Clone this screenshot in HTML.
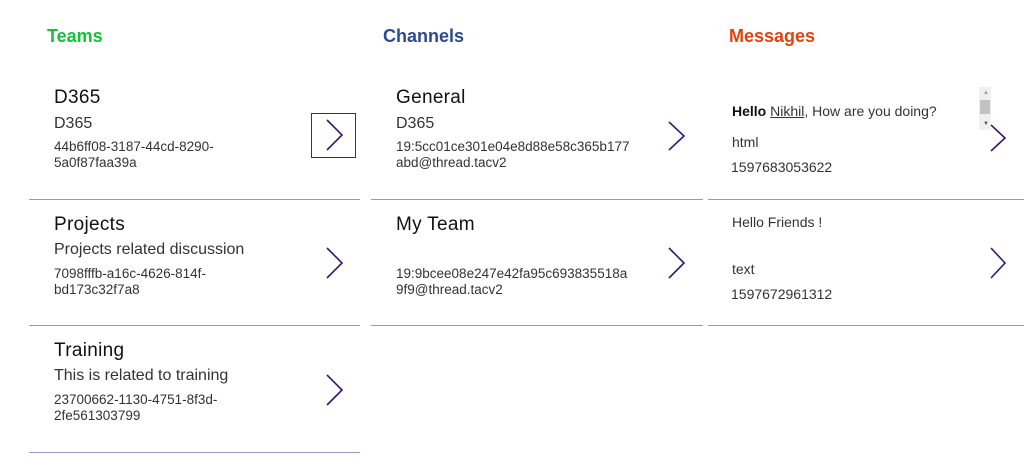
<!DOCTYPE html>
<html><head><meta charset="utf-8">
<style>
html,body{margin:0;padding:0;background:#fff;width:1024px;height:474px;overflow:hidden;position:relative;font-family:"Liberation Sans",sans-serif;}
div,svg{position:absolute;}
.h{font-weight:bold;font-size:18px;line-height:24px;}
.t{font-size:19px;color:#111;line-height:24px;letter-spacing:0.3px}
.s{font-size:16px;color:#333;line-height:20px;}
.i{font-size:13.5px;color:#333;line-height:16px;}
.m{font-size:14px;color:#333;line-height:18px;}
.ln{height:1px;background:#9c92c9;}
</style></head><body>
<div class="h" style="left:47px;top:24px;color:#13c23a">Teams</div>
<div class="h" style="left:383px;top:24px;color:#2c4a8e">Channels</div>
<div class="h" style="left:729px;top:24px;color:#e2420e">Messages</div>

<!-- Teams -->
<div class="t" style="left:54px;top:86px">D365</div>
<div class="s" style="left:54px;top:114px">D365</div>
<div class="i" style="left:54px;top:139px">44b6ff08-3187-44cd-8290-<br>5a0f87faa39a</div>
<div style="left:311px;top:113px;width:43px;height:43px;border:1.5px solid #3b2585"></div>
<div class="ln" style="left:29px;top:199px;width:331px"></div>

<div class="t" style="left:54px;top:213px">Projects</div>
<div class="s" style="left:54px;top:240px">Projects related discussion</div>
<div class="i" style="left:54px;top:266px">7098fffb-a16c-4626-814f-<br>bd173c32f7a8</div>
<div class="ln" style="left:29px;top:325px;width:331px"></div>

<div class="t" style="left:54px;top:339px">Training</div>
<div class="s" style="left:54px;top:366px">This is related to training</div>
<div class="i" style="left:54px;top:392px">23700662-1130-4751-8f3d-<br>2fe561303799</div>
<div class="ln" style="left:29px;top:452px;width:331px"></div>

<!-- Channels -->
<div class="t" style="left:396px;top:86px">General</div>
<div class="s" style="left:396px;top:114px">D365</div>
<div class="i" style="left:396px;top:139px">19:5cc01ce301e04e8d88e58c365b177<br>abd@thread.tacv2</div>
<div class="ln" style="left:371px;top:199px;width:332px"></div>
<div class="t" style="left:396px;top:213px">My Team</div>
<div class="i" style="left:396px;top:266px">19:9bcee08e247e42fa95c693835518a<br>9f9@thread.tacv2</div>
<div class="ln" style="left:371px;top:325px;width:332px"></div>

<!-- Messages -->
<div class="m" style="left:732px;top:102px"><b style="color:#111">Hello</b> <u>Nikhil</u>, How are you doing?</div>
<div class="m" style="left:732px;top:133px">html</div>
<div class="m" style="left:731px;top:158px">1597683053622</div>
<div style="left:979px;top:87px;width:12px;height:43px;background:#f0f0f0"></div>
<div style="left:980px;top:100px;width:10px;height:14px;background:#c2c2c2"></div>
<div style="left:983px;top:90px;font-size:6px;color:#999;line-height:6px">▲</div>
<div style="left:983px;top:121px;font-size:6px;color:#555;line-height:6px">▼</div>
<div class="ln" style="left:708px;top:199px;width:316px"></div>
<div class="m" style="left:732px;top:213px">Hello Friends !</div>
<div class="m" style="left:732px;top:260px">text</div>
<div class="m" style="left:731px;top:285px">1597672961312</div>
<div class="ln" style="left:708px;top:325px;width:316px"></div>

<svg width="1024" height="474" style="left:0;top:0" fill="none" stroke="#2a1a7a" stroke-width="1.6">
<polyline points="327,120 342,135 327,150"/>
<polyline points="327,248 342,263 327,278"/>
<polyline points="327,375 342,390 327,405"/>
<polyline points="669,122 684,136 669,150"/>
<polyline points="669,248 684,263 669,278"/>
<polyline points="991,125 1005,138 991,151"/>
<polyline points="991,248 1005,263 991,278"/>
</svg>
</body></html>
